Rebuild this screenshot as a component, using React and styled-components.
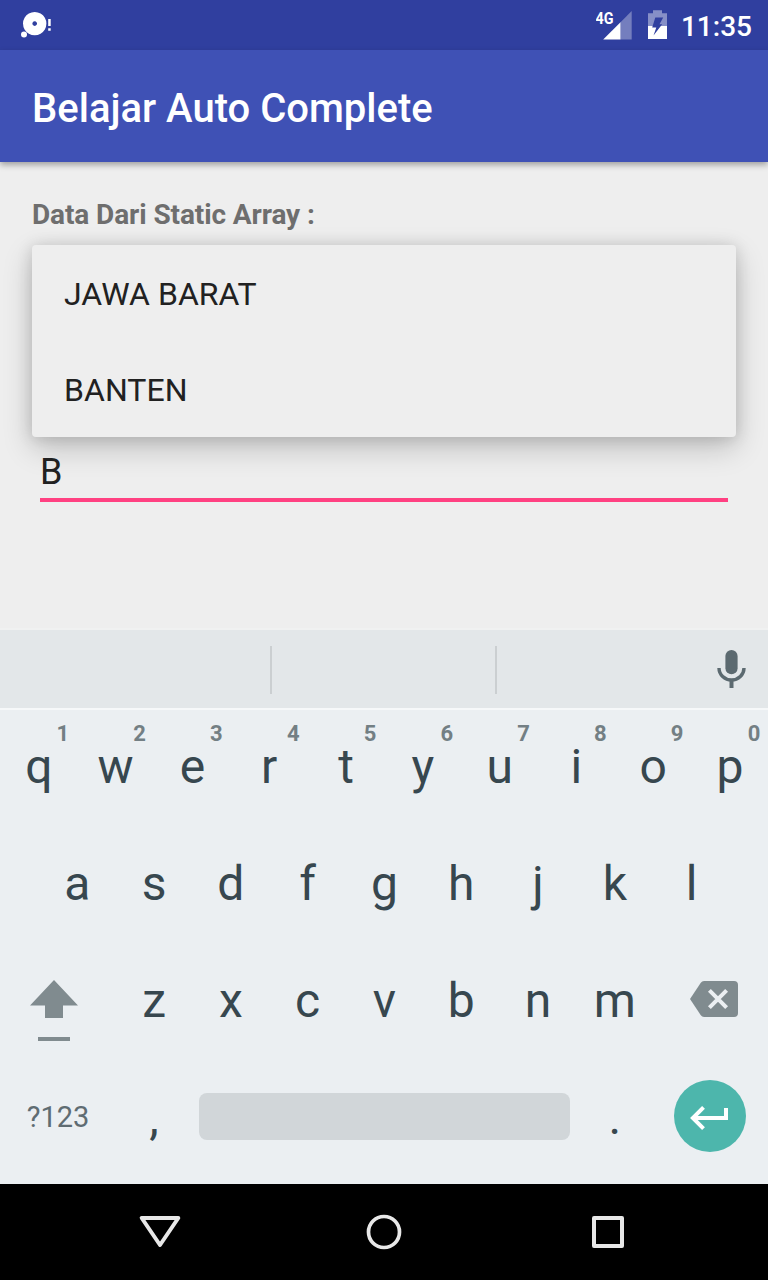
import React from "react";
import styled, { createGlobalStyle } from "styled-components";

const GlobalStyle = createGlobalStyle`
  * { box-sizing: border-box; }
  body { margin: 0; background: #eeeeee; font-family: Roboto, "Liberation Sans", sans-serif; }
  svg { display: block; flex: none; }
`;

const Screen = styled.div`
  display: flex;
  flex-direction: column;
  width: 768px;
  height: 1280px;
  overflow: hidden;
  background: #eeeeee;
`;

const StatusBar = styled.header`
  display: flex;
  justify-content: space-between;
  height: 50px;
  flex: none;
  padding: 0 16px 0 20px;
  background: #303f9f;
`;

const StatusGroup = styled.div`
  display: flex;
  align-items: flex-start;
`;

const Clock = styled.span`
  margin-left: 14px;
  color: #fff;
  font-size: 28px;
  font-weight: 500;
  line-height: 54px;
`;

const AppBar = styled.div`
  position: relative;
  display: flex;
  align-items: center;
  height: 112px;
  flex: none;
  padding: 6px 32px 0;
  background: #3f51b5;
  box-shadow: 0 3px 6px rgba(0, 0, 0, 0.32);
`;

const Title = styled.h1`
  margin: 0;
  color: #fff;
  font-size: 40px;
  font-weight: 500;
  line-height: 48px;
`;

const Content = styled.main`
  flex: 1;
  display: flex;
  flex-direction: column;
  padding: 32px 32px 0;
  border-bottom: 2px solid #f0f1f1;
`;

const Label = styled.label`
  height: 51px;
  padding-top: 1px;
  color: #6e6e6e;
  font-size: 28px;
  font-weight: 700;
  line-height: 40px;
  letter-spacing: -0.1px;
`;

const Suggestions = styled.ul`
  margin: 0;
  padding: 0;
  list-style: none;
  flex: none;
  border-radius: 4px;
  background: #eeeeee;
  box-shadow: 0 11px 30px rgba(0, 0, 0, 0.2), 0 1px 16px rgba(0, 0, 0, 0.14);
`;

const Suggestion = styled.li`
  height: 96px;
  padding: 1px 32px 0;
  color: #212121;
  font-size: 32px;
  line-height: 96px;
  letter-spacing: 0.05px;
`;

const Field = styled.div`
  height: 65px;
  margin: 0 8px;
  padding-top: 11px;
  border-bottom: 4px solid #ff4081;
  color: #212121;
  font-size: 36px;
  line-height: 48px;
`;

const PredictionStrip = styled.div`
  display: flex;
  align-items: center;
  height: 78px;
  flex: none;
  background: #e3e7e9;
`;

const Prediction = styled.div`
  width: ${(p) => p.$width}px;
  height: 48px;
  margin-top: 1px;
  border-right: 2px solid #cbcfd1;
`;

const VoiceKey = styled.div`
  flex: 1;
  display: flex;
  justify-content: flex-end;
  padding-right: 22px;
`;

const Keyboard = styled.div`
  height: 476px;
  flex: none;
  background: #ebeff2;
  box-shadow: inset 0 2px #f6f8f9;
`;

const KeyRow = styled.div`
  display: flex;
  height: 117px;
  padding: 0 ${(p) => p.$inset || 0}px;
`;

const Key = styled.div`
  position: relative;
  display: flex;
  align-items: center;
  justify-content: center;
  width: ${(p) => p.$width || 76.8}px;
  flex: none;
  padding-left: 0.9px;
  color: #37474f;
  font-size: 48px;
  line-height: 56px;
`;

const Hint = styled.span`
  position: absolute;
  top: 13px;
  right: 7.7px;
  color: #737f84;
  font-size: 22px;
  font-weight: 700;
  line-height: 26px;
`;

const SymbolsKey = styled(Key)`
  padding-bottom: 2px;
  color: #5f6c72;
  font-size: 29px;
`;

const SpaceKey = styled.div`
  width: 371px;
  height: 47px;
  margin: 34px 6px 0 7px;
  border-radius: 8px;
  background: #d1d6d9;
`;

const EnterButton = styled.div`
  display: flex;
  align-items: center;
  justify-content: center;
  width: 72px;
  height: 72px;
  padding: 3px 2px 0 0;
  margin: 0 10px 3px 0;
  border-radius: 50%;
  background: #4db6ac;
`;

const NavBar = styled.nav`
  display: flex;
  align-items: center;
  justify-content: center;
  gap: 176px;
  height: 96px;
  flex: none;
  background: #000;
`;

const DebugIcon = () => (
  <svg width="34" height="50">
    <path fill="#fff" fillRule="evenodd" d="M14.7 11.9a11.7 11.7 0 1 0 .01 0zM14.7 21.3a2.3 2.3 0 1 1-.01 0z" />
    <circle cx="4" cy="34.4" r="3" fill="#fff" />
    <path fill="#fff" d="M28.2 19h2.5v7h-2.5zM28.2 28.2h2.5v2.5h-2.5z" />
  </svg>
);

const SignalIcon = () => (
  <svg width="37" height="50">
    <path fill="#fff" fillOpacity=".33" d="M35.7 11V39.5H24.5V22.3z" />
    <path fill="#fff" d="M24.5 22.3V39.5H7.2z" />
    <text x="-0.5" y="23.7" fill="#fff" fontFamily="Roboto" fontWeight="700" fontSize="16.5" textLength="18" lengthAdjust="spacingAndGlyphs">4G</text>
  </svg>
);

const BatteryIcon = () => (
  <svg width="19" height="50">
    <path fill="#fff" fillOpacity=".42" d="M5 10.3h9v3h5V26H0V13.3h5z" />
    <path fill="#fff" d="M0 26h19v13H0z" />
    <path fill="#303f9f" d="M7.300 17.400H15.200L11.500 24.300H14.200L5.500 35.500L8.300 27.600H4.200z" />
  </svg>
);

const StatusGap = styled.span`
  width: 15px;
`;

const MicIcon = () => (
  <svg width="29" height="38" viewBox="0 0 29 38">
    <rect x="8.4" y="0" width="12.2" height="24.3" rx="6.1" fill="#5c6a70" />
    <path fill="none" stroke="#5c6a70" strokeWidth="3.4" d="M2 18a12.5 12 0 0 0 25 0" />
    <path fill="#5c6a70" d="M12.5 30h4v8h-4z" />
  </svg>
);

const ShiftIcon = () => (
  <svg width="48" height="62" viewBox="0 0 48 62">
    <path fill="#808b8f" d="M24 0L48 25.5H33V38H15V25.5H0z" />
    <path fill="#808b8f" d="M8 57h32v4H8z" />
  </svg>
);

const BackspaceIcon = () => (
  <svg width="48" height="36" viewBox="0 0 48 36">
    <path fill="#808b8f" d="M14 0H44a4 4 0 0 1 4 4V32a4 4 0 0 1-4 4H14q-2 0-3.2-1.7L0 18 10.800 1.700Q12 0 14 0z" />
    <path stroke="#ebeff2" strokeWidth="4" d="M19.400 9.400L36.600 26.600M36.600 9.400L19.400 26.600" />
  </svg>
);

const EnterIcon = () => (
  <svg width="38" height="24" viewBox="0 0 38 24">
    <path fill="none" stroke="#fff" strokeWidth="4" d="M36 2V12H3M13.500 1.400L2.900 12L13.500 22.600" />
  </svg>
);

const BackNavIcon = () => (
  <svg width="48" height="48">
    <path fill="none" stroke="#e8e8e8" strokeWidth="4" strokeLinejoin="round" d="M5.700 10H42.300L24 37z" />
  </svg>
);

const HomeNavIcon = () => (
  <svg width="48" height="48">
    <circle cx="24" cy="24" r="15.500" fill="none" stroke="#e8e8e8" strokeWidth="3.700" />
  </svg>
);

const RecentNavIcon = () => (
  <svg width="48" height="48">
    <rect x="10" y="10" width="28" height="28" fill="none" stroke="#e8e8e8" strokeWidth="4" strokeLinejoin="round" />
  </svg>
);

const ShiftKey = styled(Key)`
  align-items: flex-start;
  justify-content: flex-start;
  padding: 38px 0 0 30px;
`;

const BackspaceKey = styled(Key)`
  justify-content: flex-end;
  padding: 0 30px 3px 0;
`;

const EnterKey = styled(Key)`
  justify-content: flex-end;
  padding-right: 12px;
`;

const numbers = "1234567890";

export default function App() {
  return (
    <Screen>
      <GlobalStyle />
      <StatusBar>
        <DebugIcon />
        <StatusGroup>
          <SignalIcon />
          <StatusGap />
          <BatteryIcon />
          <Clock>11:35</Clock>
        </StatusGroup>
      </StatusBar>
      <AppBar>
        <Title>Belajar Auto Complete</Title>
      </AppBar>
      <Content>
        <Label>Data Dari Static Array :</Label>
        <Suggestions>
          <Suggestion>JAWA BARAT</Suggestion>
          <Suggestion>BANTEN</Suggestion>
        </Suggestions>
        <Field>B</Field>
      </Content>
      <PredictionStrip>
        <Prediction $width={272} />
        <Prediction $width={225} />
        <VoiceKey>
          <MicIcon />
        </VoiceKey>
      </PredictionStrip>
      <Keyboard>
        <KeyRow>
          {[..."qwertyuiop"].map((c, i) => (
            <Key key={c}>
              {c}
              <Hint>{numbers[i]}</Hint>
            </Key>
          ))}
        </KeyRow>
        <KeyRow $inset={38.4}>
          {[..."asdfghjkl"].map((c) => (
            <Key key={c}>{c}</Key>
          ))}
        </KeyRow>
        <KeyRow>
          <ShiftKey $width={115.2}>
            <ShiftIcon />
          </ShiftKey>
          {[..."zxcvbnm"].map((c) => (
            <Key key={c}>{c}</Key>
          ))}
          <BackspaceKey $width={115.2}>
            <BackspaceIcon />
          </BackspaceKey>
        </KeyRow>
        <KeyRow>
          <SymbolsKey $width={115.2}>?123</SymbolsKey>
          <Key>,</Key>
          <SpaceKey />
          <Key>.</Key>
          <EnterKey $width={115.2}>
            <EnterButton>
              <EnterIcon />
            </EnterButton>
          </EnterKey>
        </KeyRow>
      </Keyboard>
      <NavBar>
        <BackNavIcon />
        <HomeNavIcon />
        <RecentNavIcon />
      </NavBar>
    </Screen>
  );
}
